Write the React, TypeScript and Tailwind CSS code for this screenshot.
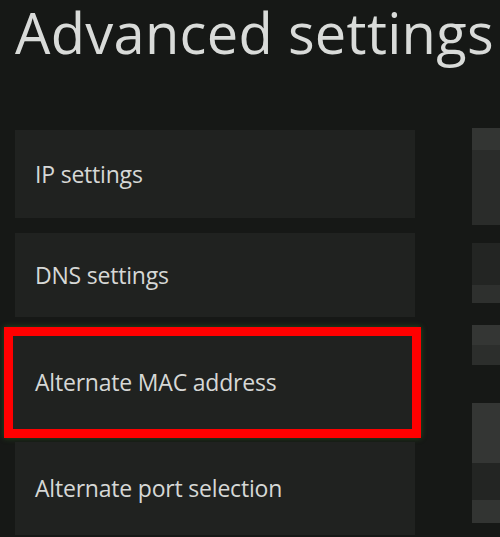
const font = { fontFamily: '"Open Sans", "Noto Sans", sans-serif' };

function Tile({ label, className = "" }: { label: string; className?: string }) {
  return (
    <div className={`flex items-center bg-[#202220] pl-[20px] ${className}`}>
      <span className="text-[23px] leading-none tracking-[-0.2px] text-[#d6d8d6]">{label}</span>
    </div>
  );
}

function SideBlocks() {
  return (
    <div className="flex w-[28px] flex-col pt-[64px]">
      <div className="h-[22px] bg-[#333533]" />
      <div className="h-[75px] bg-[#2a2c2a]" />
      <div className="h-[18px]" />
      <div className="h-[42px] bg-[#232523]" />
      <div className="h-[18px] bg-[#2e302e]" />
      <div className="h-[22px]" />
      <div className="h-[20px] bg-[#343634]" />
      <div className="h-[20px] bg-[#2c2e2c]" />
      <div className="h-[38px]" />
      <div className="h-[60px] bg-[#343634]" />
      <div className="h-[37px] bg-[#232523]" />
      <div className="h-[23px] bg-[#323432]" />
    </div>
  );
}

export default function App() {
  return (
    <div className="h-[537px] w-[500px] overflow-hidden bg-[#161816]" style={font}>
      <h1 className="whitespace-nowrap pl-[15px] text-[56px] leading-[64px] tracking-[0.3px] text-[#d9dbd9]">
        Advanced settings
      </h1>
      <div className="flex">
        <div className="w-[472px]">
          <div className="mt-[66px] flex w-[421px] flex-col pl-[4px]">
            <Tile label="IP settings" className="ml-[11px] h-[88px] w-[400px]" />
            <Tile label="DNS settings" className="ml-[11px] mt-[15px] h-[84px] w-[400px]" />
            <div className="mt-[10px] h-[111px] border-[9px] border-[#ff0000] shadow-[0_0_6px_rgba(60,140,40,0.45)]">
              <Tile label="Alternate MAC address" className="h-full bg-[#2a2b2a] pl-[22px]" />
            </div>
            <Tile label="Alternate port selection" className="ml-[11px] mt-[4px] h-[93px] w-[400px]" />
          </div>
        </div>
        <SideBlocks />
      </div>
    </div>
  );
}
